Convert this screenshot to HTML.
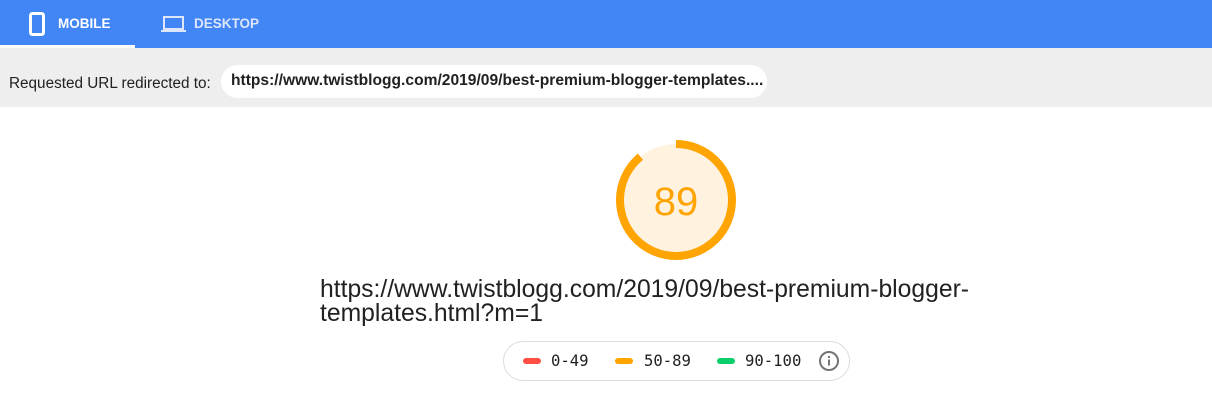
<!DOCTYPE html><html><head><style>
body{margin:0;width:1212px;height:404px;background:#fff;font-family:"Liberation Sans",sans-serif;position:relative;overflow:hidden}
.hdr{position:absolute;left:0;top:0;width:1212px;height:48px;background:#4285f4;box-shadow:0 1px 3px rgba(0,0,0,.25)}
.tab{position:absolute;top:16px;font-weight:bold;font-size:14px;color:#fff}
.bar{position:absolute;left:0;top:48px;width:1212px;height:59px;background:#eeeeee}
.pill{position:absolute;left:221px;top:65px;width:546px;height:33px;background:#fff;border-radius:17px}
.mono{font-family:"DejaVu Sans Mono","Liberation Mono",monospace}
</style></head><body>
<div class="hdr">
<svg style="position:absolute;left:29px;top:12px" width="16" height="24"><rect x="1.5" y="1.5" width="13" height="21" rx="2" fill="none" stroke="#fff" stroke-width="3"/></svg>
<div class="tab" style="left:58px;font-size:13.5px">MOBILE</div>
<div style="position:absolute;left:0;top:45px;width:135px;height:3px;background:#fff"></div>
<svg style="position:absolute;left:161px;top:16px" width="25" height="17"><rect x="3" y="1" width="19" height="12" fill="none" stroke="#dde6fb" stroke-width="2"/><rect x="0" y="14" width="25" height="2" fill="#dde6fb"/></svg>
<div class="tab" style="left:194px;color:#dde6fb;font-size:13.5px">DESKTOP</div>
</div>
<div class="bar"></div>
<div style="position:absolute;left:9px;top:75px;font-size:15.3px;color:#212121">Requested URL redirected to:</div>
<div class="pill"><div style="position:absolute;left:10px;top:7px;font-size:15.6px;font-weight:bold;color:#212121;white-space:nowrap">https://www.twistblogg.com/2019/09/best-premium-blogger-templates....</div></div>
<svg style="position:absolute;left:612px;top:136px" width="128" height="128">
<circle cx="64" cy="64" r="56" fill="#fff3e0"/>
<circle cx="64" cy="64" r="56" fill="none" stroke="#ffa400" stroke-width="8" stroke-dasharray="313 352" transform="rotate(-90 64 64)"/>
<text x="64" y="79" text-anchor="middle" font-family="Liberation Sans" font-size="40" fill="#ffa400">89</text>
</svg>
<div style="position:absolute;left:320px;top:278px;font-size:24.7px;line-height:24px;color:#212121;white-space:nowrap">https://www.twistblogg.com/2019/09/best-premium-blogger-<br>templates.html?m=1</div>
<div style="position:absolute;left:503px;top:341px;width:345px;height:38px;border:1px solid #ddd;border-radius:20px"></div>
<div style="position:absolute;left:523px;top:358px;width:18px;height:6px;border-radius:3px;background:#ff4e42"></div>
<div class="mono" style="position:absolute;left:551px;top:352px;font-size:15.6px;color:#212121">0-49</div>
<div style="position:absolute;left:615px;top:358px;width:18px;height:6px;border-radius:3px;background:#ffa400"></div>
<div class="mono" style="position:absolute;left:644px;top:352px;font-size:15.6px;color:#212121">50-89</div>
<div style="position:absolute;left:717px;top:358px;width:18px;height:6px;border-radius:3px;background:#0cce6b"></div>
<div class="mono" style="position:absolute;left:745px;top:352px;font-size:15.6px;color:#212121">90-100</div>
<svg style="position:absolute;left:818px;top:350px" width="22" height="22"><circle cx="11" cy="11" r="9" fill="none" stroke="#757575" stroke-width="2"/><rect x="10" y="9.5" width="2" height="6" fill="#757575"/><rect x="10" y="6" width="2" height="2" fill="#757575"/></svg>
</body></html>
